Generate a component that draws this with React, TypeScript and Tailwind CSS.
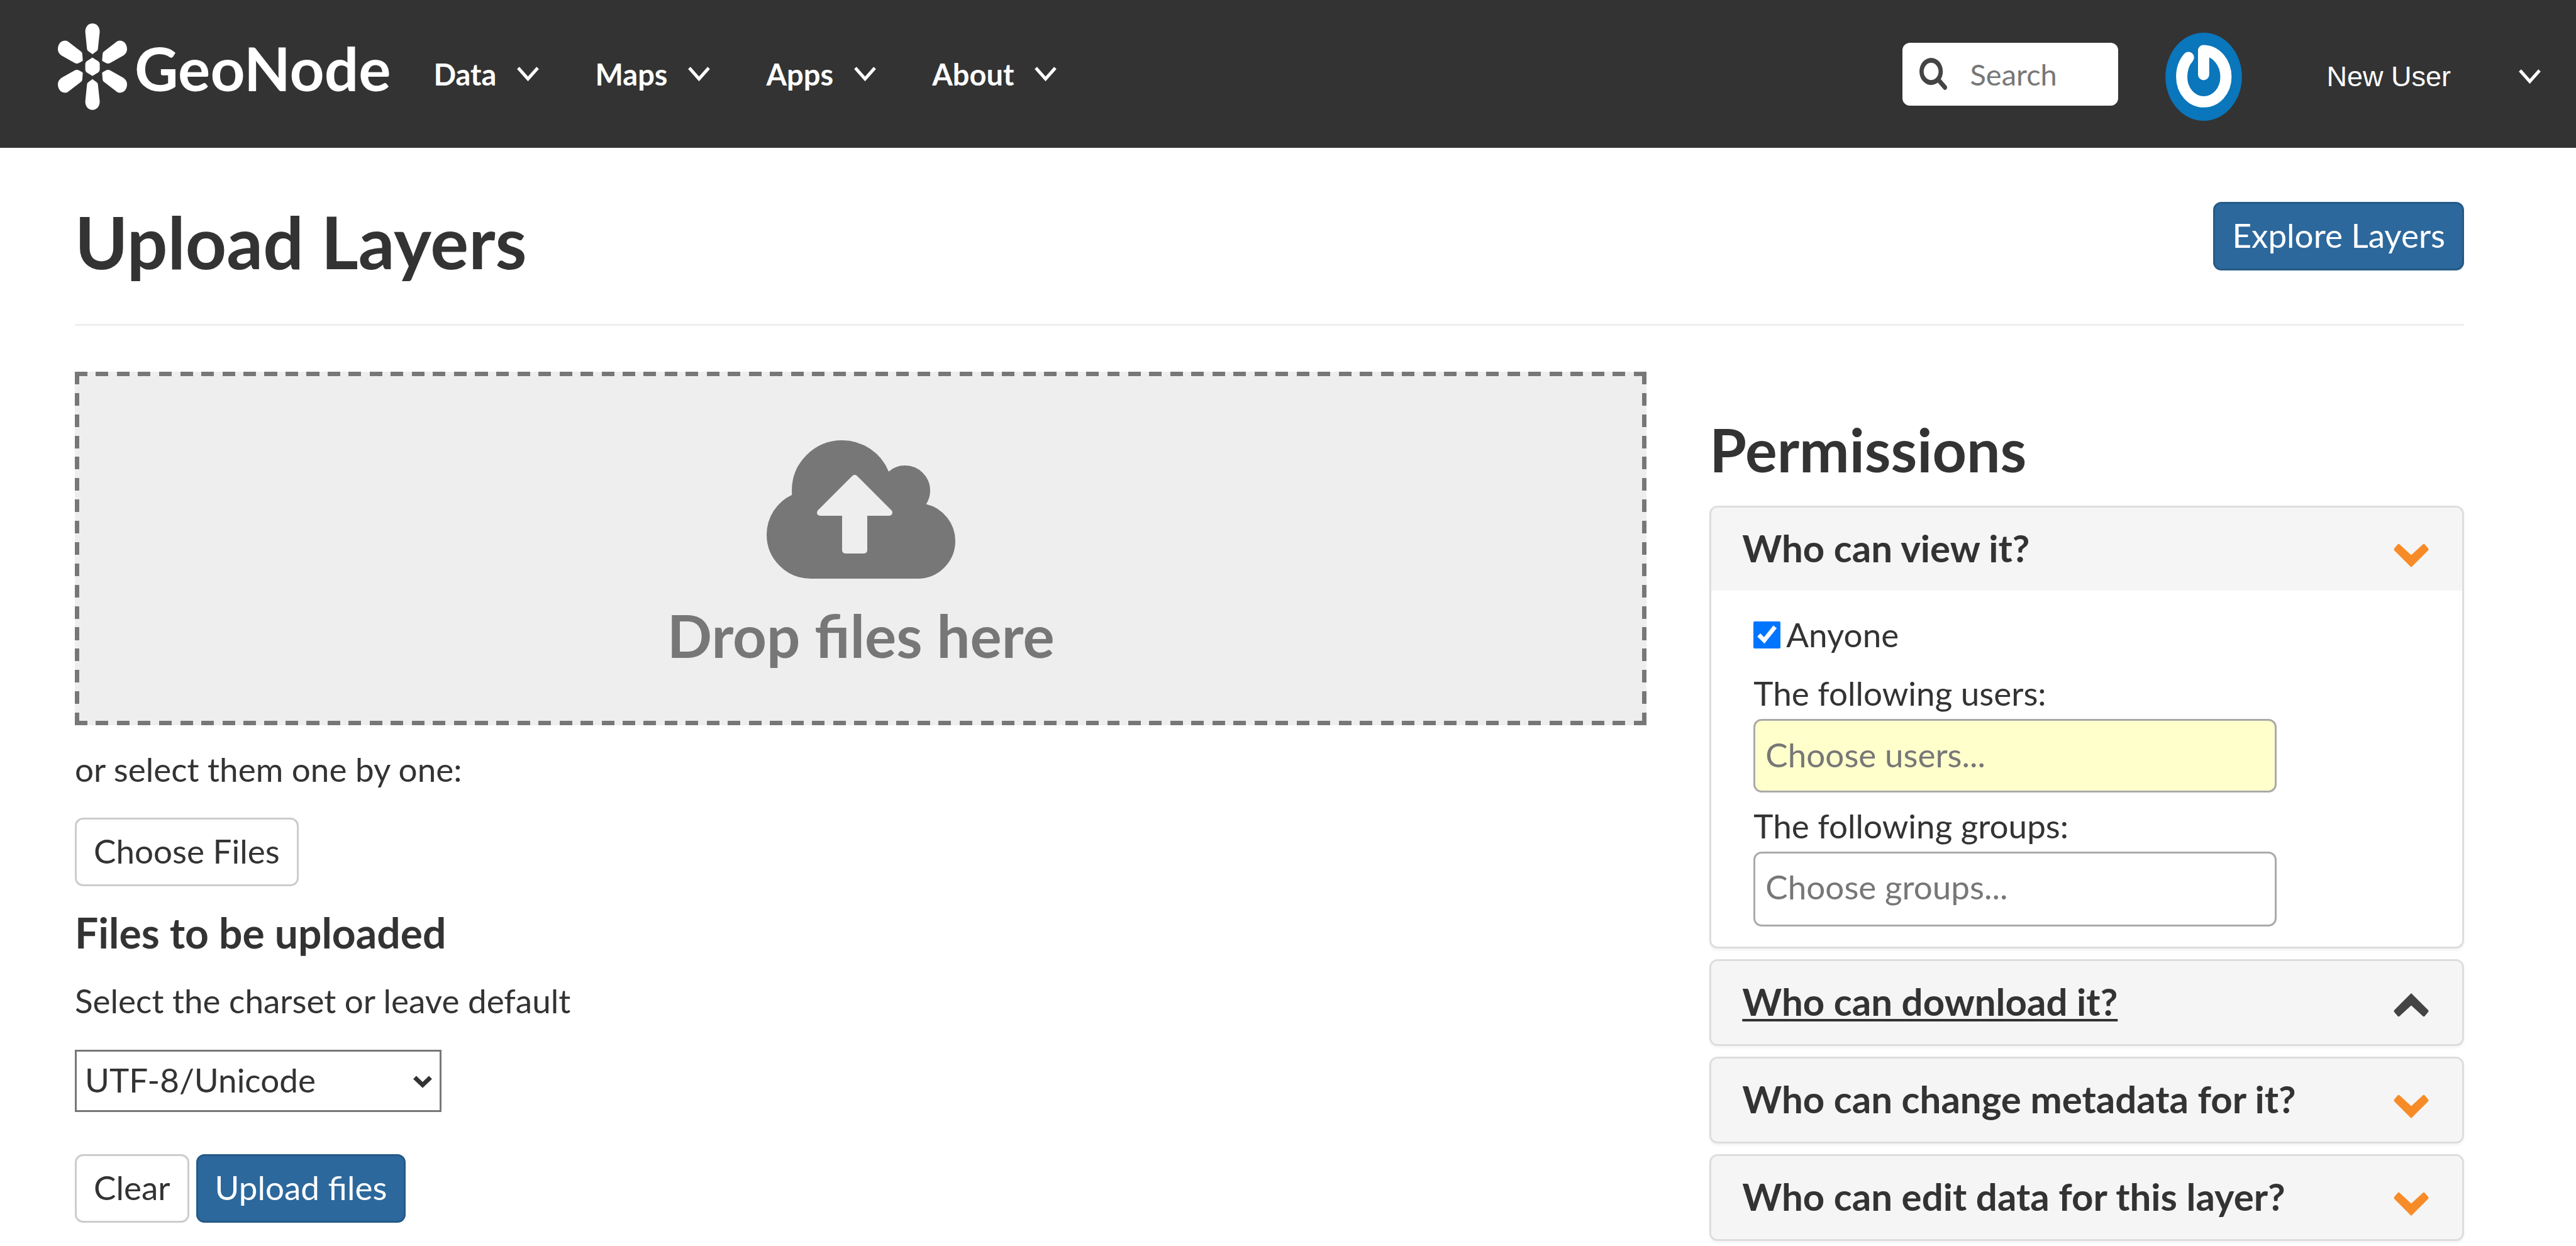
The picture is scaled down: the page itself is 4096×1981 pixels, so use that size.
import React, { useState } from "react";

const navItems = ["Data", "Maps", "Apps", "About"];

function ThinChevron() {
  return (
    <svg viewBox="0 0 35 24" className="h-6 w-[35px] shrink-0" fill="none" stroke="currentColor" strokeWidth="5" aria-hidden="true">
      <path d="M2 2 17.500 19.500 33 2" />
    </svg>
  );
}

function PanelChevron({ up }: { up?: boolean }) {
  return (
    <svg
      viewBox="0 0 56 46"
      className={up ? "h-[46px] w-14 shrink-0 text-[#444444]" : "h-[46px] w-14 shrink-0 text-[#f78b28]"}
      fill="currentColor"
      aria-hidden="true"
    >
      {up ? (
        <path d="M28 0 55 27Q56 28.500 55 30L49.500 36.500Q48 38 46.500 36.500L28 19.500 9.500 36.500Q8 38 6.500 36.500L1 30Q0 28.500 1 27Z" />
      ) : (
        <path d="M28 44 1 17Q0 15.500 1 14L6.500 7.500Q8 6 9.500 7.500L28 24.500 46.500 7.500Q48 6 49.500 7.500L55 14Q56 15.500 55 17Z" />
      )}
    </svg>
  );
}

function LogoFlower() {
  const petal =
    "M17 40.500C6 41 0 50 0 61 0 67 3 72 8.600 76L39 93Q45 97 51 93L57 90Q59.500 89 59 86L58 73Q58 70 56 67.500L27 45Q23 40.500 17 40.500Z";
  const spike = "M82 0C92 0 99.300 8 99.300 20L95 60Q94.700 63 93 65L82 73 71 65Q69.300 63 69 60L65 20C65 8 72 0 82 0Z";
  return (
    <svg viewBox="0 0 164 205" className="h-[138px] w-[110px] shrink-0" fill="currentColor" aria-hidden="true">
      <path d={spike} />
      <path d={spike} transform="matrix(1 0 0 -1 0 205)" />
      <path d="M82 81 96 90Q99.300 93 99.300 97V109Q99.300 113 96 116L82 124.500 68 116Q65 113 65 109V97Q65 93 68 90Z" />
      <path d={petal} />
      <path d={petal} transform="matrix(-1 0 0 1 164 0)" />
      <path d={petal} transform="matrix(1 0 0 -1 0 205)" />
      <path d={petal} transform="matrix(-1 0 0 -1 164 205)" />
    </svg>
  );
}

function Avatar() {
  return (
    <svg viewBox="0 0 545 627" className="h-[140px] w-[122px] shrink-0" aria-hidden="true">
      <ellipse cx="272.500" cy="313.500" rx="272.500" ry="313.500" fill="#0a76bb" />
      <path
        d="M164 177C130 215 116 265 116 315C116 415 186 492 273 492C360 492 431 415 431 315C431 215 365 130 272 127V298"
        fill="none"
        stroke="#ffffff"
        strokeWidth="80"
        strokeLinecap="round"
        strokeLinejoin="round"
      />
    </svg>
  );
}

function Header() {
  return (
    <header className="flex items-center justify-between bg-[#333333] pl-[92px] pr-14 text-white">
      <div className="flex items-center">
        <a href="#home" className="flex items-center gap-3 pt-[37px] pb-[60px]">
          <LogoFlower />
          <span className="pt-1 text-[96px] leading-[120px] font-bold">GeoNode</span>
        </a>
        <nav className="ml-[68px] flex items-center gap-[89px]">
          {navItems.map((item) => (
            <button key={item} type="button" className="flex items-center gap-[33px] text-[47px] leading-[56px] font-bold">
              {item}
              <ThinChevron />
            </button>
          ))}
        </nav>
      </div>
      <div className="flex items-center">
        <label className="flex h-[100px] w-[343px] items-center gap-9 rounded-[12px] bg-white pl-[27px] text-[#444444]">
          <svg viewBox="0 0 1664 1664" preserveAspectRatio="none" className="h-[51px] w-11 shrink-0" fill="currentColor" aria-hidden="true">
            <path d="M1152 704q0-185-131.500-316.500t-316.500-131.500-316.500 131.500-131.500 316.500 131.500 316.500 316.500 131.500 316.500-131.500 131.500-316.500zm512 832q0 52-38 90t-90 38q-54 0-90-38l-343-342q-179 124-399 124-143 0-273.500-55.500t-225-150-150-225-55.500-273.500 55.500-273.500 150-225 225-150 273.500-55.500 273.500 55.500 225 150 150 225 55.500 273.500q0 220-124 399l343 343q37 37 37 90z" />
          </svg>
          <input
            type="text"
            aria-label="Search"
            placeholder="Search"
            className="w-[200px] bg-transparent text-[47px] leading-[56px] outline-none placeholder:text-[#777777]"
          />
        </label>
        <button type="button" className="ml-[75px] flex items-center pt-2">
          <Avatar />
          <span className="ml-[134px] font-['Liberation_Sans',Arial,sans-serif] text-[45px] leading-[52px]">New User</span>
          <span className="ml-[108px]">
            <ThinChevron />
          </span>
        </button>
      </div>
    </header>
  );
}

function Button({ primary, children }: { primary?: boolean; children: React.ReactNode }) {
  return (
    <button
      type="button"
      className={
        primary
          ? "h-[109px] rounded-[13px] border-3 border-[#265a87] bg-[#2c689c] px-[27px] pb-1 text-[53px] leading-[77px] whitespace-nowrap text-white"
          : "h-[109px] rounded-[13px] border-3 border-[#cccccc] bg-white px-[27px] pb-1 text-[53px] leading-[77px] whitespace-nowrap text-[#333333]"
      }
    >
      {children}
    </button>
  );
}

function DropZone() {
  return (
    <div className="flex flex-col items-center bg-[#eeeeee] bg-[image:repeating-linear-gradient(to_right,#777_0_20px,transparent_20px_calc((100%_-_20px)/74)),repeating-linear-gradient(to_right,#777_0_20px,transparent_20px_calc((100%_-_20px)/74)),repeating-linear-gradient(to_bottom,#777_0_20px,transparent_20px_calc((100%_-_20px)/16)),repeating-linear-gradient(to_bottom,#777_0_20px,transparent_20px_calc((100%_-_20px)/16))] bg-[length:100%_7px,100%_7px,7px_100%,7px_100%] bg-[position:top,bottom,left,right] bg-no-repeat pt-[109px] pb-[91px] text-[#777777]">
      <svg viewBox="0 96 1920 1408" className="h-[220px] w-[300px]" fill="currentColor" aria-hidden="true">
        <path d="M1280 832q0-14-9-23l-352-352q-9-9-23-9t-23 9l-351 351q-10 12-10 24 0 14 9 23t23 9h224v352q0 13 9.500 22.500t22.500 9.500h192q13 0 22.500-9.500t9.500-22.500v-352h224q13 0 22.500-9.500t9.500-22.500zm640 288q0 159-112.500 271.500t-271.500 112.500h-1088q-185 0-316.500-131.500t-131.500-316.500q0-130 70-240t188-165q-2-30-2-43 0-212 150-362t362-150q156 0 285.500 87t188.500 231q71-62 166-62 106 0 181 75t75 181q0 76-41 138 130 31 213.500 135.500t83.500 238.500z" />
      </svg>
      <h3 className="mt-[38px] text-[94px] leading-[104px] font-bold">Drop files here</h3>
    </div>
  );
}

function Panel({ title, up, children }: { title: string; up?: boolean; children?: React.ReactNode }) {
  return (
    <section className="overflow-hidden rounded-[13px] border-3 border-[#dddddd] bg-white shadow-[0_3px_4px_rgba(0,0,0,0.05)]">
      <button type="button" className="flex w-full items-end justify-between bg-[#f5f5f5] pt-[31px] pr-[53px] pb-[35px] pl-[49px] text-left">
        <span
          className={
            up
              ? "text-[60px] leading-[66px] font-bold underline decoration-[4px] underline-offset-[5px]"
              : "text-[60px] leading-[66px] font-bold"
          }
        >
          {title}
        </span>
        <PanelChevron up={up} />
      </button>
      {children}
    </section>
  );
}

export default function App() {
  const [anyone, setAnyone] = useState(true);
  return (
    <div className="min-h-screen bg-white font-[Lato,sans-serif] text-[53px] text-[#333333]">
      <Header />
      <main className="pt-[86px] pr-[178px] pl-[119px]">
        <div className="flex items-start justify-between border-b-3 border-[#eeeeee] pb-[68px]">
          <h1 className="text-[114px] leading-[126px] font-bold">Upload Layers</h1>
          <Button primary>Explore Layers</Button>
        </div>
        <div className="mt-[73px] grid grid-cols-3 gap-[100px]">
          <div className="col-span-2">
            <DropZone />
            <p className="mt-[31px] mb-[39px] leading-[77px]">or select them one by one:</p>
            <Button>Choose Files</Button>
            <h4 className="mt-[38px] text-[66px] leading-[72px] font-bold">Files to be uploaded</h4>
            <label htmlFor="charset" className="mt-[33px] block leading-[77px]">
              Select the charset or leave default
            </label>
            <div className="relative mt-10 w-[583px]">
              <select
                id="charset"
                defaultValue="utf8"
                className="block h-[99px] w-full appearance-none border-3 border-[#777777] bg-white pb-1 pl-[13px] leading-[77px]"
              >
                <option value="utf8">UTF-8/Unicode</option>
              </select>
              <svg viewBox="0 0 30 20" className="pointer-events-none absolute top-[41px] right-[15px] h-5 w-[30px]" fill="none" stroke="currentColor" strokeWidth="7" aria-hidden="true">
                <path d="M2.500 3 15 15 27.500 3" />
              </svg>
            </div>
            <div className="mt-[67px] flex gap-[11px]">
              <Button>Clear</Button>
              <Button primary>Upload files</Button>
            </div>
          </div>
          <aside className="pt-[71px]">
            <h2 className="text-[95px] leading-[104px] font-bold">Permissions</h2>
            <div className="mt-[38px] flex flex-col gap-[17px]">
              <Panel title="Who can view it?">
                <div className="px-[67px] pt-10 pb-8 leading-[60px]">
                  <label className="flex items-center gap-[9px]">
                    <input
                      type="checkbox"
                      checked={anyone}
                      onChange={(e) => setAnyone(e.target.checked)}
                      className="size-[43px] accent-[#0075ff]"
                    />
                    Anyone
                  </label>
                  <label htmlFor="users" className="mt-[33px] mb-[11px] block">
                    The following users:
                  </label>
                  <input
                    id="users"
                    type="text"
                    placeholder="Choose users..."
                    className="block h-[117px] w-[832px] rounded-[13px] border-3 border-[#aaaaaa] bg-[#ffffcc] px-4 pb-1 outline-none placeholder:text-[#777777]"
                  />
                  <label htmlFor="groups" className="mt-[23px] mb-[11px] block">
                    The following groups:
                  </label>
                  <input
                    id="groups"
                    type="text"
                    placeholder="Choose groups..."
                    className="block h-[119px] w-[832px] rounded-[13px] border-3 border-[#aaaaaa] bg-white px-4 pb-2 outline-none placeholder:text-[#777777]"
                  />
                </div>
              </Panel>
              <Panel title="Who can download it?" up />
              <Panel title="Who can change metadata for it?" />
              <Panel title="Who can edit data for this layer?" />
            </div>
          </aside>
        </div>
      </main>
    </div>
  );
}
